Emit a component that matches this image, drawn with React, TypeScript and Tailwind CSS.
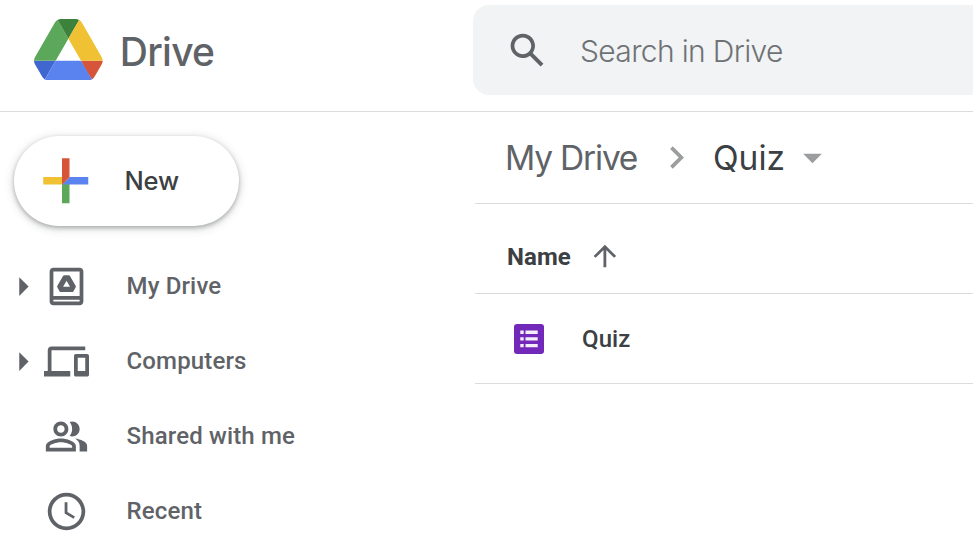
import type { ReactNode } from "react";

const ICON = "size-[45px] shrink-0 fill-current";

const paths = {
  search:
    "M20.49,19l-5.73-5.73C15.53,12.2,16,10.91,16,9.5C16,5.91,13.09,3,9.5,3S3,5.91,3,9.5C3,13.09,5.91,16,9.5,16c1.41,0,2.7-0.47,3.77-1.24L19,20.49L20.49,19z M5,9.5C5,7.01,7.01,5,9.5,5S14,7.01,14,9.5S11.99,14,9.5,14S5,11.99,5,9.5z",
  drive:
    "M19 2H5C3.9 2 3 2.9 3 4V20C3 21.1 3.9 22 5 22H19C20.1 22 21 21.1 21 20V4C21 2.9 20.1 2 19 2ZM19 20H5V19H19V20ZM19 17H5V4H19V17ZM13.12 6H10.88C10.55 6 10.27 6.19 10.08 6.47L7.14 11.61C7 11.89 7 12.26 7.14 12.54L8.26 14.5C8.4 14.79 8.73 14.97 9.06 14.97H14.94C15.27 14.97 15.55 14.79 15.74 14.5L16.86 12.54C17.05 12.26 17.05 11.89 16.86 11.61L13.92 6.47C13.78 6.19 13.45 6 13.12 6ZM10.18 12.07L12.05 8.9L13.87 12.07H10.18Z",
  computers:
    "M4 6h18V4H4c-1.1 0-2 .9-2 2v11H0v3h14v-3H4V6zm19 2h-6c-.55 0-1 .45-1 1v10c0 .55.45 1 1 1h6c.55 0 1-.45 1-1V9c0-.55-.45-1-1-1zm-1 9h-4v-7h4v7z",
  shared:
    "M9 12c2.21 0 4-1.79 4-4s-1.79-4-4-4-4 1.79-4 4 1.79 4 4 4zm0-6c1.1 0 2 .9 2 2s-.9 2-2 2-2-.9-2-2 .9-2 2-2zM9 13c-2.67 0-8 1.34-8 4v3h16v-3c0-2.66-5.33-4-8-4zm6 5H3v-.99C3.2 16.29 6.3 15 9 15s5.8 1.29 6 2v1zM13.67 11.76C14.5 10.73 15 9.42 15 8s-.5-2.73-1.33-3.76C14.09 4.1 14.53 4 15 4c2.21 0 4 1.79 4 4s-1.79 4-4 4c-.47 0-.91-.1-1.33-.24zM16.66 13.13C18.03 14.06 19 15.32 19 17v3h4v-3c0-2.18-3.58-3.47-6.34-3.87z",
  recent:
    "M11.99 2C6.47 2 2 6.48 2 12s4.47 10 9.99 10C17.52 22 22 17.52 22 12S17.52 2 11.99 2zM12 20c-4.42 0-8-3.58-8-8s3.58-8 8-8 8 3.58 8 8-3.58 8-8 8zM12.5 7H11v6l4.75 2.85.75-1.23-4-2.37z",
  expand: "M10.25 17l5-5-5-5v10z",
  chevron: "M10 6L8.59 7.41 13.17 12l-4.58 4.59L10 18l6-6z",
  dropdown: "M7 10l5 5 5-5z",
  arrowUp: "M4 12l1.41 1.41L11 7.83V20h2V7.83l5.58 5.59L20 12l-8-8-8 8z",
};

function Icon({ d, className = ICON }: { d: string; className?: string }) {
  return (
    <svg viewBox="0 0 24 24" className={className}>
      <path d={d} />
    </svg>
  );
}

function DriveLogo() {
  return (
    <svg viewBox="0 0 87.3 78" className="h-[61.4px] w-[68.7px] shrink-0">
      <path fill="#4066cf" d="m6.6 66.85 3.85 6.65c.8 1.4 1.95 2.5 3.3 3.3l13.75-23.8h-27.5c0 1.55.4 3.1 1.2 4.5z" />
      <path fill="#5ba85a" d="m43.65 25-13.75-23.8c-1.35.8-2.5 1.9-3.3 3.3l-25.4 44a9.06 9.06 0 0 0 -1.2 4.5h27.5z" />
      <path fill="#d65439" d="m73.55 76.8c1.35-.8 2.5-1.9 3.3-3.3l1.6-2.75 7.65-13.25c.8-1.4 1.2-2.95 1.2-4.5h-27.5l5.85 11.5z" />
      <path fill="#3d823c" d="m43.65 25 13.75-23.8c-1.35-.8-2.9-1.2-4.5-1.2h-18.5c-1.6 0-3.15.45-4.5 1.2z" />
      <path fill="#5b83f0" d="m59.8 53h-32.3l-13.75 23.8c1.35.8 2.9 1.2 4.5 1.2h50.8c1.6 0 3.15-.45 4.5-1.2z" />
      <path fill="#f0c132" d="m73.4 26.5-12.7-22c-.8-1.4-1.95-2.5-3.3-3.3l-13.75 23.8 16.15 28h27.45c0-1.55-.4-3.1-1.2-4.5z" />
    </svg>
  );
}

function NewButton() {
  return (
    <button className="ml-3.5 mt-6 flex h-[90px] w-[225px] items-center rounded-full bg-white pl-[18px] shadow-[0_2px_4px_rgba(60,64,67,0.35),0_2px_8px_2px_rgba(60,64,67,0.15)]">
      <svg viewBox="0 0 36 36" className="size-[67.5px] shrink-0">
        <path fill="#5ba85a" d="M16 16v14h4V20z" />
        <path fill="#5b83f0" d="M30 16H20l-4 4h14z" />
        <path fill="#f0c132" d="M6 16v4h10l4-4z" />
        <path fill="#d65439" d="M20 16V6h-4v14z" />
      </svg>
      <span className="ml-[25px] text-[25.5px] font-medium tracking-[-0.2px] text-[#3c4043]">New</span>
    </button>
  );
}

function NavItem({ d, expandable, children }: { d: string; expandable?: boolean; children: ReactNode }) {
  return (
    <a className="flex h-[75px] items-center">
      <span className="flex w-11 shrink-0">{expandable && <Icon d={paths.expand} />}</span>
      <Icon d={d} />
      <span className="ml-[37.5px] whitespace-nowrap font-['Roboto',sans-serif] text-[24px] font-medium tracking-[0.15px]">
        {children}
      </span>
    </a>
  );
}

export default function App() {
  return (
    <div className="flex h-[555px] w-[973px] flex-col overflow-hidden bg-white font-['Inter',sans-serif] text-[#5f6368]">
      <header className="flex h-28 shrink-0 border-b border-[#dadce0]">
        <div className="flex w-[473px] shrink-0 pl-[34px] pt-[19px]">
          <DriveLogo />
          <span className="ml-[17px] mt-[8px] text-[39px] font-[450] leading-[50px] tracking-[-0.7px]">Drive</span>
        </div>
        <div className="mt-[5px] flex h-[90px] flex-1 items-center rounded-l-2xl bg-[#f1f3f4] pl-8">
          <Icon d={paths.search} />
          <span className="ml-[30px] mt-[3px] text-[30px] font-[360] tracking-[-0.65px] text-[#6f7275]">Search in Drive</span>
        </div>
      </header>

      <div className="flex flex-1">
        <nav className="w-[475px] shrink-0">
          <NewButton />
          <div className="mt-[22.5px]">
            <NavItem d={paths.drive} expandable>My Drive</NavItem>
            <NavItem d={paths.computers} expandable>Computers</NavItem>
            <NavItem d={paths.shared}>Shared with me</NavItem>
            <NavItem d={paths.recent}>Recent</NavItem>
          </div>
        </nav>

        <main className="flex-1">
          <div className="flex h-[92px] items-center border-b border-[#dadce0] pl-[30px] text-[33.5px] font-normal">
            <span className="w-[149px] whitespace-nowrap pt-px tracking-[-1.2px]">My Drive</span>
            <span className="text-[#9b9d9f]"><Icon d={paths.chevron} /></span>
            <span className="ml-[14px] w-[77px] whitespace-nowrap pt-px tracking-[0px] text-[#3c4043]">Quiz</span>
            <span className="text-[#9b9d9f]"><Icon d={paths.dropdown} /></span>
          </div>
          <div className="flex h-[90px] items-center border-b border-[#dadce0] pl-8 pt-[17px]">
            <span className="w-[81px] font-['Roboto',sans-serif] text-[24px] font-bold tracking-[0.1px] text-[#3c4043]">Name</span>
            <Icon d={paths.arrowUp} className="mb-0.5 size-[33.75px] fill-current" />
          </div>
          <div className="flex h-[90px] items-center border-b border-[#dadce0] pl-[39px]">
            <svg viewBox="0 0 30 30" className="size-[30px] shrink-0">
              <rect width="30" height="30" rx="3" fill="#7229b9" />
              <path
                fill="#fff"
                fillOpacity=".92"
                d="M6.3 6.5h3.4v3.4H6.3zM11.5 6.5h12.2v3.4H11.5zM6.3 13.2h3.4v3.4H6.3zM11.5 13.2h12.2v3.4H11.5zM6.3 19.9h3.4v3.4H6.3zM11.5 19.9h12.2v3.4H11.5z"
              />
            </svg>
            <span className="ml-[38px] font-['Roboto',sans-serif] text-[24px] font-medium tracking-[0.1px] text-[#3c4043]">Quiz</span>
          </div>
        </main>
      </div>
    </div>
  );
}
